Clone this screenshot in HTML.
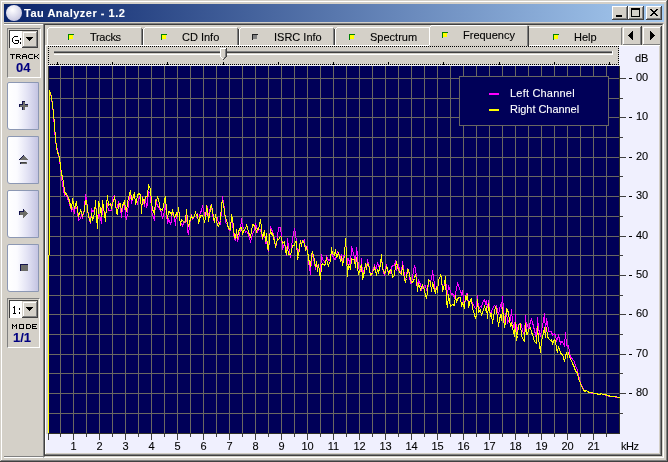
<!DOCTYPE html>
<html><head><meta charset="utf-8">
<style>
*{margin:0;padding:0;box-sizing:border-box}
html,body{width:668px;height:462px;overflow:hidden;background:#d4d0c8;font-family:"Liberation Sans",sans-serif;font-size:11px;color:#000}
.a{position:absolute}
.t{position:absolute;white-space:nowrap;line-height:13px;will-change:transform;-webkit-text-stroke:0.1px currentColor}
</style></head><body>
<!-- window frame -->
<div class="a" style="left:1px;top:1px;width:666px;height:1px;background:#fff"></div>
<div class="a" style="left:1px;top:1px;width:1px;height:460px;background:#fff"></div>
<div class="a" style="left:666px;top:1px;width:1px;height:460px;background:#808080"></div>
<div class="a" style="left:1px;top:460px;width:666px;height:1px;background:#808080"></div>
<div class="a" style="left:667px;top:0;width:1px;height:462px;background:#404040"></div>
<div class="a" style="left:0;top:461px;width:668px;height:1px;background:#404040"></div>

<!-- title bar -->
<div class="a" style="left:4px;top:4px;width:660px;height:18px;background:linear-gradient(to right,#0a246a,#a6caf0)"></div>
<div class="a" style="left:6px;top:5px;width:16px;height:16px;border-radius:50%;background:radial-gradient(circle at 40% 30%,#ffffff 0,#f0f0f8 22%,#d4d4e8 60%,#b4b4d4 100%)"></div>
<div class="t" style="left:24px;top:7px;color:#fff;font-weight:bold;font-size:11px;letter-spacing:0.5px">Tau Analyzer - 1.2</div>

<!-- caption buttons -->
<div class="a" style="left:612px;top:6px;width:16px;height:14px;background:#404040;"></div><div class="a" style="left:612px;top:6px;width:15px;height:13px;background:#fff;"></div><div class="a" style="left:613px;top:7px;width:14px;height:12px;background:#808080;"></div><div class="a" style="left:613px;top:7px;width:13px;height:11px;background:#d4d0c8;"></div><div class="a" style="left:614px;top:8px;width:12px;height:10px;background:#d4d0c8;"></div><div class="a" style="left:616px;top:15px;width:6px;height:2px;background:#000;"></div><div class="a" style="left:628px;top:6px;width:16px;height:14px;background:#404040;"></div><div class="a" style="left:628px;top:6px;width:15px;height:13px;background:#fff;"></div><div class="a" style="left:629px;top:7px;width:14px;height:12px;background:#808080;"></div><div class="a" style="left:629px;top:7px;width:13px;height:11px;background:#d4d0c8;"></div><div class="a" style="left:630px;top:8px;width:12px;height:10px;background:#d4d0c8;"></div><div class="a" style="left:631px;top:8px;width:9px;height:9px;background:transparent;border:1px solid #000;border-top-width:2px"></div><div class="a" style="left:646px;top:6px;width:16px;height:14px;background:#404040;"></div><div class="a" style="left:646px;top:6px;width:15px;height:13px;background:#fff;"></div><div class="a" style="left:647px;top:7px;width:14px;height:12px;background:#808080;"></div><div class="a" style="left:647px;top:7px;width:13px;height:11px;background:#d4d0c8;"></div><div class="a" style="left:648px;top:8px;width:12px;height:10px;background:#d4d0c8;"></div><svg class="a" style="left:646px;top:6px" width="16" height="14" shape-rendering="crispEdges"><path d="M4 3h2v1h1v1h2v-1h1v-1h2v1h-1v1h-1v1h-1v1h1v1h1v1h1v1h-2v-1h-1v-1h-2v1h-1v1h-2v-1h1v-1h1v-1h1v-1h-1v-1h-1v-1h-1z" fill="#000"/></svg>

<!-- left panel etched -->
<div class="a" style="left:4px;top:23px;width:39px;height:1px;background:#808080"></div>
<div class="a" style="left:4px;top:24px;width:39px;height:1px;background:#fff"></div>
<div class="a" style="left:4px;top:456px;width:39px;height:1px;background:#808080"></div>
<div class="a" style="left:4px;top:457px;width:39px;height:1px;background:#fff"></div>

<!-- tab panel sunken border -->
<div class="a" style="left:43px;top:23px;width:621px;height:435px;border-top:1px solid #808080;border-left:1px solid #808080;border-right:1px solid #fff;border-bottom:1px solid #fff"></div>
<div class="a" style="left:44px;top:24px;width:619px;height:433px;border-top:1px solid #404040;border-left:1px solid #404040;border-right:1px solid #d4d0c8;border-bottom:1px solid #d4d0c8"></div>

<div class="a" style="left:7px;top:28px;width:34px;height:50px;background:transparent;border-top:1px solid #808080;border-left:1px solid #808080;border-right:1px solid #fff;border-bottom:1px solid #fff"></div><div class="a" style="left:9px;top:30px;width:29px;height:18px;background:#404040;"></div><div class="a" style="left:10px;top:31px;width:28px;height:17px;background:#fff;"></div><div class="a" style="left:22px;top:31px;width:16px;height:17px;background:#404040;"></div><div class="a" style="left:22px;top:31px;width:15px;height:16px;background:#d4d0c8;"></div><div class="a" style="left:23px;top:32px;width:14px;height:15px;background:#808080;"></div><div class="a" style="left:23px;top:32px;width:13px;height:14px;background:#fff;"></div><div class="a" style="left:24px;top:33px;width:12px;height:13px;background:#d4d0c8;"></div><svg class="a" style="left:26px;top:37px" width="7" height="4" shape-rendering="crispEdges"><path d="M0 0h7v1h-1v1h-1v1h-1v1h-1v-1h-1v-1h-1v-1h-1z" fill="#000"/></svg><svg class="a" style="left:0;top:0" width="668" height="462" shape-rendering="crispEdges"><path d="M14 36h1v1h-1zM15 36h1v1h-1zM16 36h1v1h-1zM17 36h1v1h-1zM13 37h1v1h-1zM12 38h1v1h-1zM12 39h1v1h-1zM12 40h1v1h-1zM15 40h1v1h-1zM16 40h1v1h-1zM17 40h1v1h-1zM18 40h1v1h-1zM12 41h1v1h-1zM18 41h1v1h-1zM13 42h1v1h-1zM18 42h1v1h-1zM14 43h1v1h-1zM15 43h1v1h-1zM16 43h1v1h-1zM17 43h1v1h-1zM20 38h1v1h-1zM20 39h1v1h-1zM20 42h1v1h-1zM20 43h1v1h-1z" fill="#000"/></svg><svg class="a" style="left:0;top:0" width="668" height="462" shape-rendering="crispEdges"><path d="M10 54h1v1h-1zM11 54h1v1h-1zM12 54h1v1h-1zM13 54h1v1h-1zM14 54h1v1h-1zM12 55h1v1h-1zM12 56h1v1h-1zM12 57h1v1h-1zM12 58h1v1h-1zM16 54h1v1h-1zM17 54h1v1h-1zM18 54h1v1h-1zM19 54h1v1h-1zM16 55h1v1h-1zM20 55h1v1h-1zM16 56h1v1h-1zM17 56h1v1h-1zM18 56h1v1h-1zM19 56h1v1h-1zM16 57h1v1h-1zM19 57h1v1h-1zM16 58h1v1h-1zM20 58h1v1h-1zM23 54h1v1h-1zM24 54h1v1h-1zM25 54h1v1h-1zM22 55h1v1h-1zM26 55h1v1h-1zM22 56h1v1h-1zM23 56h1v1h-1zM24 56h1v1h-1zM25 56h1v1h-1zM26 56h1v1h-1zM22 57h1v1h-1zM26 57h1v1h-1zM22 58h1v1h-1zM26 58h1v1h-1zM29 54h1v1h-1zM30 54h1v1h-1zM31 54h1v1h-1zM32 54h1v1h-1zM28 55h1v1h-1zM28 56h1v1h-1zM28 57h1v1h-1zM29 58h1v1h-1zM30 58h1v1h-1zM31 58h1v1h-1zM32 58h1v1h-1zM34 54h1v1h-1zM38 54h1v1h-1zM34 55h1v1h-1zM37 55h1v1h-1zM34 56h1v1h-1zM35 56h1v1h-1zM36 56h1v1h-1zM34 57h1v1h-1zM37 57h1v1h-1zM34 58h1v1h-1zM38 58h1v1h-1z" fill="#000"/></svg><div class="t" style="left:16px;top:60px;font-size:13px;font-weight:bold;color:#000080;line-height:15px">04</div><div class="a" style="left:7px;top:82px;width:32px;height:48px;border:1px solid #8c98b4;border-radius:2px 0 0 3px;background:linear-gradient(to right,#ffffff 0%,#fbfbff 30%,#e2e2f4 65%,#c4c4e2 100%)"></div><svg class="a" style="left:19px;top:101px" width="9" height="9" shape-rendering="crispEdges"><path d="M3 0h3v3h3v3h-3v3h-3v-3h-3v-3h3z" fill="#6c6c68"/><path d="M3 0h3v1h-2v3h-3v2h-1v-3h3z M6 3h3v1h-3z M3 6h1v3h-1z" fill="#14144c"/></svg><div class="a" style="left:7px;top:136px;width:32px;height:48px;border:1px solid #8c98b4;border-radius:2px 0 0 3px;background:linear-gradient(to right,#ffffff 0%,#fbfbff 30%,#e2e2f4 65%,#c4c4e2 100%)"></div><svg class="a" style="left:19px;top:155px" width="9" height="9" shape-rendering="crispEdges"><path d="M4 0h1v1h1v1h1v1h1v1h1v1h-9v-1h1v-1h1v-1h1v-1h1z" fill="#6c6c68"/><path d="M4 0h1v1h-1v1h-1v1h-1v1h-1v1h-1v-1h1v-1h1v-1h1v-1h1z" fill="#14144c"/><rect x="1" y="7" width="7" height="2" fill="#6c6c68"/><rect x="1" y="7" width="1" height="2" fill="#14144c"/><rect x="1" y="7" width="6" height="1" fill="#404040"/></svg><div class="a" style="left:7px;top:190px;width:32px;height:48px;border:1px solid #8c98b4;border-radius:2px 0 0 3px;background:linear-gradient(to right,#ffffff 0%,#fbfbff 30%,#e2e2f4 65%,#c4c4e2 100%)"></div><svg class="a" style="left:19px;top:209px" width="9" height="9" shape-rendering="crispEdges"><path d="M4 0h1v1h1v1h1v1h1v1h1v1h-1v1h-1v1h-1v1h-1v1h-1v-3h-4v-4h4z" fill="#6c6c68"/><path d="M4 0h1v3h-4v3h-1v-4h4z" fill="#14144c"/></svg><div class="a" style="left:7px;top:244px;width:32px;height:48px;border:1px solid #8c98b4;border-radius:2px 0 0 3px;background:linear-gradient(to right,#ffffff 0%,#fbfbff 30%,#e2e2f4 65%,#c4c4e2 100%)"></div><svg class="a" style="left:20px;top:264px" width="8" height="7" shape-rendering="crispEdges"><rect x="0" y="0" width="8" height="7" fill="#6c6c68"/><path d="M0 0h8v1h-7v6h-1z" fill="#14144c"/></svg><div class="a" style="left:7px;top:298px;width:33px;height:50px;background:transparent;border-top:1px solid #808080;border-left:1px solid #808080;border-right:1px solid #fff;border-bottom:1px solid #fff"></div><div class="a" style="left:9px;top:300px;width:29px;height:18px;background:#404040;"></div><div class="a" style="left:10px;top:301px;width:28px;height:17px;background:#fff;"></div><div class="a" style="left:22px;top:301px;width:16px;height:17px;background:#404040;"></div><div class="a" style="left:22px;top:301px;width:15px;height:16px;background:#d4d0c8;"></div><div class="a" style="left:23px;top:302px;width:14px;height:15px;background:#808080;"></div><div class="a" style="left:23px;top:302px;width:13px;height:14px;background:#fff;"></div><div class="a" style="left:24px;top:303px;width:12px;height:13px;background:#d4d0c8;"></div><svg class="a" style="left:26px;top:307px" width="7" height="4" shape-rendering="crispEdges"><path d="M0 0h7v1h-1v1h-1v1h-1v1h-1v-1h-1v-1h-1v-1h-1z" fill="#000"/></svg><svg class="a" style="left:0;top:0" width="668" height="462" shape-rendering="crispEdges"><path d="M14 306h1v1h-1zM13 307h1v1h-1zM14 307h1v1h-1zM14 308h1v1h-1zM14 309h1v1h-1zM14 310h1v1h-1zM14 311h1v1h-1zM14 312h1v1h-1zM13 313h1v1h-1zM14 313h1v1h-1zM15 313h1v1h-1zM19 308h1v1h-1zM19 309h1v1h-1zM19 312h1v1h-1zM19 313h1v1h-1z" fill="#000"/></svg><svg class="a" style="left:0;top:0" width="668" height="462" shape-rendering="crispEdges"><path d="M12 324h1v1h-1zM16 324h1v1h-1zM12 325h1v1h-1zM13 325h1v1h-1zM15 325h1v1h-1zM16 325h1v1h-1zM12 326h1v1h-1zM14 326h1v1h-1zM16 326h1v1h-1zM12 327h1v1h-1zM16 327h1v1h-1zM12 328h1v1h-1zM16 328h1v1h-1zM19 324h1v1h-1zM20 324h1v1h-1zM21 324h1v1h-1zM22 324h1v1h-1zM23 324h1v1h-1zM19 325h1v1h-1zM23 325h1v1h-1zM19 326h1v1h-1zM23 326h1v1h-1zM19 327h1v1h-1zM23 327h1v1h-1zM19 328h1v1h-1zM20 328h1v1h-1zM21 328h1v1h-1zM22 328h1v1h-1zM23 328h1v1h-1zM26 324h1v1h-1zM27 324h1v1h-1zM28 324h1v1h-1zM29 324h1v1h-1zM26 325h1v1h-1zM30 325h1v1h-1zM26 326h1v1h-1zM30 326h1v1h-1zM26 327h1v1h-1zM30 327h1v1h-1zM26 328h1v1h-1zM27 328h1v1h-1zM28 328h1v1h-1zM29 328h1v1h-1zM32 324h1v1h-1zM33 324h1v1h-1zM34 324h1v1h-1zM35 324h1v1h-1zM36 324h1v1h-1zM32 325h1v1h-1zM32 326h1v1h-1zM33 326h1v1h-1zM34 326h1v1h-1zM35 326h1v1h-1zM32 327h1v1h-1zM32 328h1v1h-1zM33 328h1v1h-1zM34 328h1v1h-1zM35 328h1v1h-1zM36 328h1v1h-1z" fill="#000"/></svg><div class="t" style="left:13px;top:330px;font-size:13px;font-weight:bold;color:#000080;line-height:15px">1/1</div>

<div class="a" style="left:49px;top:27px;width:92px;height:1px;background:#fff;"></div><div class="a" style="left:48px;top:28px;width:1px;height:1px;background:#fff;"></div><div class="a" style="left:47px;top:29px;width:1px;height:16px;background:#fff;"></div><div class="a" style="left:141px;top:28px;width:1px;height:17px;background:#808080;"></div><div class="a" style="left:142px;top:29px;width:1px;height:16px;background:#404040;"></div><div class="a" style="left:68px;top:34px;width:6px;height:1px;background:#008000;"></div><div class="a" style="left:68px;top:34px;width:1px;height:6px;background:#008000;"></div><div class="a" style="left:69px;top:35px;width:4px;height:4px;background:#ffff00;"></div><div class="t" style="left:90px;top:31px;letter-spacing:-0.3px">Tracks</div><div class="a" style="left:145px;top:27px;width:92px;height:1px;background:#fff;"></div><div class="a" style="left:144px;top:28px;width:1px;height:1px;background:#fff;"></div><div class="a" style="left:143px;top:29px;width:1px;height:16px;background:#fff;"></div><div class="a" style="left:237px;top:28px;width:1px;height:17px;background:#808080;"></div><div class="a" style="left:238px;top:29px;width:1px;height:16px;background:#404040;"></div><div class="a" style="left:161px;top:34px;width:6px;height:1px;background:#008000;"></div><div class="a" style="left:161px;top:34px;width:1px;height:6px;background:#008000;"></div><div class="a" style="left:162px;top:35px;width:4px;height:4px;background:#ffff00;"></div><div class="t" style="left:182px;top:31px">CD Info</div><div class="a" style="left:241px;top:27px;width:92px;height:1px;background:#fff;"></div><div class="a" style="left:240px;top:28px;width:1px;height:1px;background:#fff;"></div><div class="a" style="left:239px;top:29px;width:1px;height:16px;background:#fff;"></div><div class="a" style="left:333px;top:28px;width:1px;height:17px;background:#808080;"></div><div class="a" style="left:334px;top:29px;width:1px;height:16px;background:#404040;"></div><div class="a" style="left:252px;top:34px;width:6px;height:1px;background:#202020;"></div><div class="a" style="left:252px;top:34px;width:1px;height:6px;background:#202020;"></div><div class="a" style="left:253px;top:35px;width:4px;height:4px;background:#808080;"></div><div class="t" style="left:274px;top:31px">ISRC Info</div><div class="a" style="left:337px;top:27px;width:92px;height:1px;background:#fff;"></div><div class="a" style="left:336px;top:28px;width:1px;height:1px;background:#fff;"></div><div class="a" style="left:335px;top:29px;width:1px;height:16px;background:#fff;"></div><div class="a" style="left:349px;top:34px;width:6px;height:1px;background:#008000;"></div><div class="a" style="left:349px;top:34px;width:1px;height:6px;background:#008000;"></div><div class="a" style="left:350px;top:35px;width:4px;height:4px;background:#ffff00;"></div><div class="t" style="left:370px;top:31px">Spectrum</div><div class="a" style="left:529px;top:27px;width:92px;height:1px;background:#fff;"></div><div class="a" style="left:528px;top:28px;width:1px;height:1px;background:#fff;"></div><div class="a" style="left:527px;top:29px;width:1px;height:16px;background:#fff;"></div><div class="a" style="left:621px;top:28px;width:1px;height:17px;background:#808080;"></div><div class="a" style="left:622px;top:29px;width:1px;height:16px;background:#404040;"></div><div class="a" style="left:553px;top:34px;width:6px;height:1px;background:#008000;"></div><div class="a" style="left:553px;top:34px;width:1px;height:6px;background:#008000;"></div><div class="a" style="left:554px;top:35px;width:4px;height:4px;background:#ffff00;"></div><div class="t" style="left:574px;top:31px">Help</div><div class="a" style="left:430px;top:26px;width:97px;height:20px;background:#d4d0c8;"></div><div class="a" style="left:430px;top:26px;width:1px;height:1px;background:#fff;"></div><div class="a" style="left:431px;top:25px;width:96px;height:1px;background:#fff;"></div><div class="a" style="left:429px;top:27px;width:1px;height:18px;background:#fff;"></div><div class="a" style="left:527px;top:26px;width:1px;height:20px;background:#808080;"></div><div class="a" style="left:528px;top:26px;width:1px;height:20px;background:#404040;"></div><div class="a" style="left:442px;top:32px;width:6px;height:1px;background:#008000;"></div><div class="a" style="left:442px;top:32px;width:1px;height:6px;background:#008000;"></div><div class="a" style="left:443px;top:33px;width:4px;height:4px;background:#ffff00;"></div><div class="t" style="left:463px;top:29px">Frequency</div><div class="a" style="left:622px;top:26px;width:20px;height:20px;background:#404040;"></div><div class="a" style="left:622px;top:26px;width:19px;height:19px;background:#d4d0c8;"></div><div class="a" style="left:623px;top:27px;width:18px;height:18px;background:#808080;"></div><div class="a" style="left:623px;top:27px;width:17px;height:17px;background:#fff;"></div><div class="a" style="left:624px;top:28px;width:16px;height:16px;background:#d4d0c8;"></div><div class="a" style="left:642px;top:26px;width:20px;height:20px;background:#404040;"></div><div class="a" style="left:642px;top:26px;width:19px;height:19px;background:#d4d0c8;"></div><div class="a" style="left:643px;top:27px;width:18px;height:18px;background:#808080;"></div><div class="a" style="left:643px;top:27px;width:17px;height:17px;background:#fff;"></div><div class="a" style="left:644px;top:28px;width:16px;height:16px;background:#d4d0c8;"></div><svg class="a" style="left:628px;top:31px" width="5" height="9" shape-rendering="crispEdges"><path d="M4 0h1v9h-1v-1h-1v-1h-1v-1h-1v-1h-1v-1h1v-1h1v-1h1v-1h1z" fill="#000"/></svg><svg class="a" style="left:650px;top:31px" width="5" height="9" shape-rendering="crispEdges"><path d="M0 0h1v1h1v1h1v1h1v1h1v1h-1v1h-1v1h-1v1h-1v1h-1z" fill="#000"/></svg>

<div class="a" style="left:45px;top:45px;width:384px;height:1px;background:#fff;"></div><div class="a" style="left:529px;top:45px;width:131px;height:1px;background:#fff;"></div><div class="a" style="left:45px;top:45px;width:1px;height:410px;background:#fff;"></div><div class="a" style="left:660px;top:45px;width:1px;height:410px;background:#808080;"></div><div class="a" style="left:661px;top:45px;width:1px;height:411px;background:#404040;"></div><div class="a" style="left:45px;top:454px;width:616px;height:1px;background:#808080;"></div><div class="a" style="left:45px;top:455px;width:617px;height:1px;background:#404040;"></div><div class="a" style="left:48px;top:65px;width:572px;height:1px;background:#f4f4fc;"></div><div class="a" style="left:46px;top:434px;width:613px;height:19px;background:#f0f0fe;"></div><div class="a" style="left:619px;top:46px;width:40px;height:388px;background:#f0f0fe;"></div><div class="a" style="left:48px;top:46px;width:571px;height:19px;background:transparent;border:1px dotted #000"></div><div class="a" style="left:54px;top:51px;width:559px;height:1px;background:#808080;"></div><div class="a" style="left:54px;top:52px;width:558px;height:1px;background:#404040;"></div><div class="a" style="left:54px;top:54px;width:559px;height:1px;background:#fff;"></div><div class="a" style="left:612px;top:51px;width:1px;height:4px;background:#fff;"></div><div class="a" style="left:57px;top:62px;width:1px;height:3px;background:#000;"></div><div class="a" style="left:112px;top:62px;width:1px;height:3px;background:#000;"></div><div class="a" style="left:167px;top:62px;width:1px;height:3px;background:#000;"></div><div class="a" style="left:223px;top:62px;width:1px;height:3px;background:#000;"></div><div class="a" style="left:278px;top:62px;width:1px;height:3px;background:#000;"></div><div class="a" style="left:333px;top:62px;width:1px;height:3px;background:#000;"></div><div class="a" style="left:388px;top:62px;width:1px;height:3px;background:#000;"></div><div class="a" style="left:443px;top:62px;width:1px;height:3px;background:#000;"></div><div class="a" style="left:499px;top:62px;width:1px;height:3px;background:#000;"></div><div class="a" style="left:554px;top:62px;width:1px;height:3px;background:#000;"></div><div class="a" style="left:609px;top:62px;width:1px;height:3px;background:#000;"></div><svg class="a" style="left:220px;top:48px" width="8" height="14" shape-rendering="crispEdges"><path d="M0 0h7v9h-1v1h-1v1h-1v1h-1v-1h-1v-1h-1v-1h-1z" fill="#d4d0c8"/><path d="M0 0h6v1h-5v8h-1z M1 9h1v1h-1z M2 10h1v1h-1z" fill="#fff"/><path d="M5 1h1v8h-1z M4 9h1v1h-1z" fill="#808080"/><path d="M6 0h1v9h-1z M5 9h1v1h-1z M4 10h1v1h-1z M3 11h1v1h-1z" fill="#404040"/></svg><svg class="a" style="left:48px;top:66px;overflow:visible" width="572" height="368" shape-rendering="crispEdges"><rect x="0" y="0" width="572" height="368" fill="#000058"/><path d="M12.5 0V368M25.5 0V368M38.5 0V368M51.5 0V368M64.5 0V368M77.5 0V368M90.5 0V368M103.5 0V368M116.5 0V368M129.5 0V368M142.5 0V368M155.5 0V368M168.5 0V368M181.5 0V368M194.5 0V368M207.5 0V368M220.5 0V368M233.5 0V368M246.5 0V368M259.5 0V368M272.5 0V368M285.5 0V368M298.5 0V368M311.5 0V368M324.5 0V368M337.5 0V368M350.5 0V368M363.5 0V368M376.5 0V368M389.5 0V368M402.5 0V368M415.5 0V368M428.5 0V368M441.5 0V368M454.5 0V368M467.5 0V368M480.5 0V368M493.5 0V368M506.5 0V368M519.5 0V368M532.5 0V368M545.5 0V368M558.5 0V368M0 12.5H572M0 32.5H572M0 51.5H572M0 71.5H572M0 91.5H572M0 110.5H572M0 130.5H572M0 150.5H572M0 170.5H572M0 189.5H572M0 209.5H572M0 229.5H572M0 248.5H572M0 268.5H572M0 288.5H572M0 307.5H572M0 327.5H572M0 347.5H572" stroke="#6a6862" stroke-width="1" fill="none"/><rect x="571" y="0" width="1" height="368" fill="#303028"/><rect x="0" y="0" width="1" height="368" fill="#3a3a36"/><rect x="0" y="367" width="572" height="1" fill="#303028"/></svg><div class="a" style="left:48px;top:434px;width:1px;height:6px;background:#404040;"></div><div class="a" style="left:60px;top:434px;width:1px;height:3px;background:#404040;"></div><div class="a" style="left:73px;top:434px;width:1px;height:6px;background:#404040;"></div><div class="a" style="left:86px;top:434px;width:1px;height:3px;background:#404040;"></div><div class="a" style="left:99px;top:434px;width:1px;height:6px;background:#404040;"></div><div class="a" style="left:112px;top:434px;width:1px;height:3px;background:#404040;"></div><div class="a" style="left:125px;top:434px;width:1px;height:6px;background:#404040;"></div><div class="a" style="left:138px;top:434px;width:1px;height:3px;background:#404040;"></div><div class="a" style="left:151px;top:434px;width:1px;height:6px;background:#404040;"></div><div class="a" style="left:164px;top:434px;width:1px;height:3px;background:#404040;"></div><div class="a" style="left:177px;top:434px;width:1px;height:6px;background:#404040;"></div><div class="a" style="left:190px;top:434px;width:1px;height:3px;background:#404040;"></div><div class="a" style="left:203px;top:434px;width:1px;height:6px;background:#404040;"></div><div class="a" style="left:216px;top:434px;width:1px;height:3px;background:#404040;"></div><div class="a" style="left:229px;top:434px;width:1px;height:6px;background:#404040;"></div><div class="a" style="left:242px;top:434px;width:1px;height:3px;background:#404040;"></div><div class="a" style="left:255px;top:434px;width:1px;height:6px;background:#404040;"></div><div class="a" style="left:268px;top:434px;width:1px;height:3px;background:#404040;"></div><div class="a" style="left:281px;top:434px;width:1px;height:6px;background:#404040;"></div><div class="a" style="left:294px;top:434px;width:1px;height:3px;background:#404040;"></div><div class="a" style="left:307px;top:434px;width:1px;height:6px;background:#404040;"></div><div class="a" style="left:320px;top:434px;width:1px;height:3px;background:#404040;"></div><div class="a" style="left:333px;top:434px;width:1px;height:6px;background:#404040;"></div><div class="a" style="left:346px;top:434px;width:1px;height:3px;background:#404040;"></div><div class="a" style="left:359px;top:434px;width:1px;height:6px;background:#404040;"></div><div class="a" style="left:372px;top:434px;width:1px;height:3px;background:#404040;"></div><div class="a" style="left:385px;top:434px;width:1px;height:6px;background:#404040;"></div><div class="a" style="left:398px;top:434px;width:1px;height:3px;background:#404040;"></div><div class="a" style="left:411px;top:434px;width:1px;height:6px;background:#404040;"></div><div class="a" style="left:424px;top:434px;width:1px;height:3px;background:#404040;"></div><div class="a" style="left:437px;top:434px;width:1px;height:6px;background:#404040;"></div><div class="a" style="left:450px;top:434px;width:1px;height:3px;background:#404040;"></div><div class="a" style="left:463px;top:434px;width:1px;height:6px;background:#404040;"></div><div class="a" style="left:476px;top:434px;width:1px;height:3px;background:#404040;"></div><div class="a" style="left:489px;top:434px;width:1px;height:6px;background:#404040;"></div><div class="a" style="left:502px;top:434px;width:1px;height:3px;background:#404040;"></div><div class="a" style="left:515px;top:434px;width:1px;height:6px;background:#404040;"></div><div class="a" style="left:528px;top:434px;width:1px;height:3px;background:#404040;"></div><div class="a" style="left:541px;top:434px;width:1px;height:6px;background:#404040;"></div><div class="a" style="left:554px;top:434px;width:1px;height:3px;background:#404040;"></div><div class="a" style="left:567px;top:434px;width:1px;height:6px;background:#404040;"></div><div class="a" style="left:580px;top:434px;width:1px;height:3px;background:#404040;"></div><div class="a" style="left:593px;top:434px;width:1px;height:6px;background:#404040;"></div><div class="a" style="left:606px;top:434px;width:1px;height:3px;background:#404040;"></div><div class="a" style="left:620px;top:78px;width:6px;height:1px;background:#404040;"></div><div class="a" style="left:629px;top:78px;width:3px;height:1px;background:#000;"></div><div class="t" style="left:636px;top:71px">00</div><div class="a" style="left:620px;top:98px;width:3px;height:1px;background:#404040;"></div><div class="a" style="left:620px;top:117px;width:6px;height:1px;background:#404040;"></div><div class="a" style="left:629px;top:117px;width:3px;height:1px;background:#000;"></div><div class="t" style="left:636px;top:110px">10</div><div class="a" style="left:620px;top:137px;width:3px;height:1px;background:#404040;"></div><div class="a" style="left:620px;top:157px;width:6px;height:1px;background:#404040;"></div><div class="a" style="left:629px;top:157px;width:3px;height:1px;background:#000;"></div><div class="t" style="left:636px;top:150px">20</div><div class="a" style="left:620px;top:176px;width:3px;height:1px;background:#404040;"></div><div class="a" style="left:620px;top:196px;width:6px;height:1px;background:#404040;"></div><div class="a" style="left:629px;top:196px;width:3px;height:1px;background:#000;"></div><div class="t" style="left:636px;top:189px">30</div><div class="a" style="left:620px;top:216px;width:3px;height:1px;background:#404040;"></div><div class="a" style="left:620px;top:236px;width:6px;height:1px;background:#404040;"></div><div class="a" style="left:629px;top:236px;width:3px;height:1px;background:#000;"></div><div class="t" style="left:636px;top:229px">40</div><div class="a" style="left:620px;top:255px;width:3px;height:1px;background:#404040;"></div><div class="a" style="left:620px;top:275px;width:6px;height:1px;background:#404040;"></div><div class="a" style="left:629px;top:275px;width:3px;height:1px;background:#000;"></div><div class="t" style="left:636px;top:268px">50</div><div class="a" style="left:620px;top:295px;width:3px;height:1px;background:#404040;"></div><div class="a" style="left:620px;top:314px;width:6px;height:1px;background:#404040;"></div><div class="a" style="left:629px;top:314px;width:3px;height:1px;background:#000;"></div><div class="t" style="left:636px;top:307px">60</div><div class="a" style="left:620px;top:334px;width:3px;height:1px;background:#404040;"></div><div class="a" style="left:620px;top:354px;width:6px;height:1px;background:#404040;"></div><div class="a" style="left:629px;top:354px;width:3px;height:1px;background:#000;"></div><div class="t" style="left:636px;top:347px">70</div><div class="a" style="left:620px;top:373px;width:3px;height:1px;background:#404040;"></div><div class="a" style="left:620px;top:393px;width:6px;height:1px;background:#404040;"></div><div class="a" style="left:629px;top:393px;width:3px;height:1px;background:#000;"></div><div class="t" style="left:636px;top:386px">80</div><div class="a" style="left:620px;top:413px;width:3px;height:1px;background:#404040;"></div><div class="t" style="left:53px;top:440px;width:41px;text-align:center">1</div><div class="t" style="left:79px;top:440px;width:41px;text-align:center">2</div><div class="t" style="left:105px;top:440px;width:41px;text-align:center">3</div><div class="t" style="left:131px;top:440px;width:41px;text-align:center">4</div><div class="t" style="left:157px;top:440px;width:41px;text-align:center">5</div><div class="t" style="left:183px;top:440px;width:41px;text-align:center">6</div><div class="t" style="left:209px;top:440px;width:41px;text-align:center">7</div><div class="t" style="left:235px;top:440px;width:41px;text-align:center">8</div><div class="t" style="left:261px;top:440px;width:41px;text-align:center">9</div><div class="t" style="left:287px;top:440px;width:41px;text-align:center">10</div><div class="t" style="left:313px;top:440px;width:41px;text-align:center">11</div><div class="t" style="left:339px;top:440px;width:41px;text-align:center">12</div><div class="t" style="left:365px;top:440px;width:41px;text-align:center">13</div><div class="t" style="left:391px;top:440px;width:41px;text-align:center">14</div><div class="t" style="left:417px;top:440px;width:41px;text-align:center">15</div><div class="t" style="left:443px;top:440px;width:41px;text-align:center">16</div><div class="t" style="left:469px;top:440px;width:41px;text-align:center">17</div><div class="t" style="left:495px;top:440px;width:41px;text-align:center">18</div><div class="t" style="left:521px;top:440px;width:41px;text-align:center">19</div><div class="t" style="left:547px;top:440px;width:41px;text-align:center">20</div><div class="t" style="left:573px;top:440px;width:41px;text-align:center">21</div><div class="t" style="left:621px;top:440px;letter-spacing:-0.5px">kHz</div><div class="t" style="left:635px;top:52px">dB</div><svg class="a" style="left:0;top:0" width="668" height="462"><polyline points="48.5,433.5 49.5,90.5 50.5,93.5 51.5,97.5 52.5,105.5 53.5,113.5 54.5,129.5 55.5,140.5 56.5,146.5 57.5,150.5 58.5,153.5 60.5,167.5 61.5,176.5 62.5,184.5 64.5,195.5 65.5,194.5 66.5,195.5 67.5,198.5 68.5,200.5 70.5,207.5 71.5,210.5 72.5,208.5 74.5,212.5 75.5,206.5 76.5,207.5 77.5,210.5 78.5,220.5 80.5,218.5 81.5,215.5 82.5,217.5 84.5,208.5 85.5,194.5 86.5,199.5 87.5,207.5 88.5,215.5 90.5,223.5 91.5,208.5 92.5,211.5 94.5,210.5 95.5,206.5 96.5,209.5 97.5,226.5 98.5,212.5 100.5,218.5 101.5,223.5 102.5,206.5 104.5,212.5 105.5,217.5 106.5,206.5 107.5,204.5 108.5,210.5 110.5,210.5 111.5,210.5 112.5,197.5 114.5,195.5 115.5,202.5 116.5,211.5 117.5,205.5 118.5,202.5 120.5,208.5 121.5,217.5 122.5,206.5 124.5,203.5 125.5,215.5 126.5,219.5 127.5,213.5 128.5,203.5 130.5,193.5 131.5,203.5 132.5,198.5 134.5,192.5 135.5,204.5 136.5,200.5 137.5,203.5 138.5,199.5 140.5,195.5 141.5,211.5 142.5,196.5 144.5,206.5 145.5,198.5 146.5,207.5 147.5,203.5 148.5,191.5 150.5,193.5 151.5,211.5 152.5,214.5 154.5,220.5 155.5,199.5 156.5,203.5 157.5,205.5 158.5,207.5 160.5,210.5 161.5,212.5 162.5,218.5 164.5,211.5 165.5,204.5 166.5,214.5 167.5,223.5 168.5,219.5 170.5,223.5 171.5,221.5 172.5,209.5 174.5,217.5 175.5,225.5 176.5,213.5 177.5,216.5 178.5,209.5 180.5,224.5 181.5,223.5 182.5,225.5 184.5,221.5 185.5,222.5 186.5,211.5 187.5,231.5 188.5,233.5 190.5,218.5 191.5,214.5 192.5,219.5 194.5,216.5 195.5,211.5 196.5,216.5 197.5,214.5 198.5,223.5 200.5,211.5 201.5,211.5 202.5,205.5 204.5,214.5 205.5,216.5 206.5,212.5 207.5,206.5 208.5,218.5 210.5,205.5 211.5,205.5 212.5,214.5 214.5,222.5 215.5,214.5 216.5,221.5 217.5,217.5 218.5,223.5 220.5,224.5 221.5,208.5 222.5,196.5 224.5,209.5 225.5,222.5 226.5,223.5 227.5,223.5 228.5,229.5 230.5,230.5 231.5,215.5 232.5,224.5 234.5,239.5 235.5,240.5 236.5,234.5 237.5,241.5 238.5,238.5 240.5,229.5 241.5,218.5 242.5,226.5 244.5,229.5 245.5,232.5 246.5,231.5 247.5,232.5 248.5,235.5 250.5,241.5 251.5,238.5 252.5,233.5 254.5,230.5 255.5,223.5 256.5,226.5 257.5,231.5 258.5,229.5 260.5,229.5 261.5,234.5 262.5,238.5 264.5,232.5 265.5,243.5 266.5,239.5 267.5,247.5 268.5,251.5 270.5,226.5 271.5,230.5 272.5,230.5 274.5,239.5 275.5,245.5 276.5,245.5 277.5,237.5 278.5,227.5 280.5,227.5 281.5,235.5 282.5,249.5 284.5,243.5 285.5,246.5 286.5,255.5 287.5,238.5 288.5,246.5 290.5,257.5 291.5,248.5 292.5,238.5 294.5,228.5 295.5,232.5 296.5,242.5 297.5,253.5 298.5,252.5 300.5,240.5 301.5,244.5 302.5,241.5 304.5,239.5 305.5,250.5 306.5,249.5 307.5,246.5 308.5,261.5 310.5,274.5 311.5,257.5 312.5,255.5 314.5,262.5 315.5,269.5 316.5,261.5 317.5,267.5 318.5,266.5 320.5,272.5 321.5,254.5 322.5,259.5 324.5,261.5 325.5,264.5 326.5,255.5 327.5,258.5 328.5,260.5 330.5,259.5 331.5,251.5 332.5,255.5 334.5,259.5 335.5,259.5 336.5,254.5 337.5,251.5 338.5,252.5 340.5,258.5 341.5,254.5 342.5,261.5 344.5,253.5 345.5,240.5 346.5,251.5 347.5,264.5 348.5,258.5 350.5,266.5 351.5,246.5 352.5,249.5 354.5,258.5 355.5,263.5 356.5,247.5 357.5,254.5 358.5,268.5 360.5,271.5 361.5,258.5 362.5,274.5 364.5,268.5 365.5,267.5 366.5,268.5 367.5,259.5 368.5,263.5 370.5,274.5 371.5,275.5 372.5,270.5 374.5,265.5 375.5,269.5 376.5,267.5 377.5,262.5 378.5,266.5 380.5,265.5 381.5,257.5 382.5,267.5 384.5,275.5 385.5,267.5 386.5,264.5 387.5,271.5 388.5,272.5 390.5,273.5 391.5,267.5 392.5,265.5 394.5,265.5 395.5,260.5 396.5,270.5 397.5,267.5 398.5,265.5 400.5,273.5 401.5,272.5 402.5,261.5 404.5,275.5 405.5,281.5 406.5,275.5 407.5,268.5 408.5,269.5 410.5,283.5 411.5,283.5 412.5,276.5 414.5,265.5 415.5,268.5 416.5,276.5 417.5,286.5 418.5,280.5 420.5,284.5 421.5,289.5 422.5,287.5 424.5,285.5 425.5,285.5 426.5,290.5 427.5,291.5 428.5,282.5 430.5,280.5 431.5,279.5 432.5,270.5 434.5,284.5 435.5,291.5 436.5,286.5 437.5,292.5 438.5,279.5 440.5,276.5 441.5,277.5 442.5,289.5 444.5,284.5 445.5,276.5 446.5,291.5 447.5,294.5 448.5,285.5 450.5,291.5 451.5,294.5 452.5,293.5 454.5,297.5 455.5,292.5 456.5,289.5 457.5,283.5 458.5,285.5 460.5,291.5 461.5,294.5 462.5,290.5 464.5,306.5 465.5,298.5 466.5,293.5 467.5,293.5 468.5,305.5 470.5,300.5 471.5,302.5 472.5,302.5 474.5,307.5 475.5,308.5 476.5,307.5 477.5,295.5 478.5,309.5 480.5,306.5 481.5,307.5 482.5,302.5 484.5,299.5 485.5,303.5 486.5,301.5 487.5,307.5 488.5,300.5 490.5,315.5 491.5,311.5 492.5,308.5 494.5,305.5 495.5,306.5 496.5,305.5 497.5,310.5 498.5,314.5 500.5,304.5 501.5,308.5 502.5,296.5 504.5,322.5 505.5,315.5 506.5,311.5 507.5,322.5 508.5,320.5 510.5,320.5 511.5,309.5 512.5,321.5 514.5,330.5 515.5,314.5 516.5,333.5 517.5,330.5 518.5,324.5 520.5,323.5 521.5,325.5 522.5,330.5 524.5,335.5 525.5,315.5 526.5,328.5 527.5,324.5 528.5,329.5 530.5,321.5 531.5,319.5 532.5,322.5 534.5,330.5 535.5,334.5 536.5,338.5 537.5,317.5 538.5,328.5 540.5,336.5 541.5,329.5 542.5,326.5 544.5,313.5 545.5,331.5 546.5,318.5 547.5,322.5 548.5,331.5 550.5,331.5 551.5,331.5 552.5,335.5 554.5,333.5 555.5,335.5 556.5,340.5 557.5,338.5 558.5,335.5 560.5,343.5 561.5,341.5 562.5,341.5 564.5,346.5 565.5,332.5 566.5,344.5 567.5,346.5 568.5,345.5 570.5,357.5 571.5,357.5 572.5,359.5 574.5,361.5 575.5,366.5 577.5,369.5 578.5,375.5 580.5,382.5 581.5,385.5 583.5,389.5 584.5,390.5 586.5,390.5 587.5,391.5 589.5,392.5 590.5,392.5 592.5,393.5 593.5,393.5 595.5,393.5 596.5,393.5 598.5,394.5 599.5,394.5 601.5,393.5 602.5,394.5 604.5,394.5 605.5,395.5 607.5,395.5 608.5,396.5 610.5,396.5 611.5,396.5 613.5,396.5 614.5,396.5 616.5,397.5 617.5,397.5 619.5,397.5" fill="none" stroke="#ff00ff" stroke-width="1" shape-rendering="crispEdges"/><polyline points="48.5,433.5 49.5,90.5 50.5,93.5 51.5,96.5 52.5,104.5 53.5,112.5 54.5,125.5 55.5,138.5 56.5,146.5 57.5,153.5 58.5,153.5 60.5,164.5 61.5,174.5 62.5,176.5 64.5,190.5 65.5,194.5 66.5,193.5 67.5,196.5 68.5,197.5 70.5,205.5 71.5,209.5 72.5,198.5 74.5,208.5 75.5,204.5 76.5,202.5 77.5,209.5 78.5,216.5 80.5,210.5 81.5,212.5 82.5,215.5 84.5,210.5 85.5,200.5 86.5,200.5 87.5,209.5 88.5,216.5 90.5,222.5 91.5,213.5 92.5,220.5 94.5,213.5 95.5,200.5 96.5,216.5 97.5,228.5 98.5,201.5 100.5,208.5 101.5,216.5 102.5,200.5 104.5,214.5 105.5,221.5 106.5,204.5 107.5,195.5 108.5,205.5 110.5,203.5 111.5,208.5 112.5,203.5 114.5,197.5 115.5,201.5 116.5,213.5 117.5,214.5 118.5,204.5 120.5,203.5 121.5,211.5 122.5,205.5 124.5,201.5 125.5,208.5 126.5,211.5 127.5,203.5 128.5,197.5 130.5,190.5 131.5,199.5 132.5,199.5 134.5,192.5 135.5,204.5 136.5,201.5 137.5,195.5 138.5,193.5 140.5,194.5 141.5,213.5 142.5,197.5 144.5,202.5 145.5,196.5 146.5,196.5 147.5,196.5 148.5,184.5 150.5,189.5 151.5,202.5 152.5,209.5 154.5,213.5 155.5,200.5 156.5,200.5 157.5,197.5 158.5,199.5 160.5,210.5 161.5,209.5 162.5,210.5 164.5,200.5 165.5,196.5 166.5,211.5 167.5,218.5 168.5,211.5 170.5,212.5 171.5,214.5 172.5,210.5 174.5,217.5 175.5,216.5 176.5,212.5 177.5,216.5 178.5,207.5 180.5,225.5 181.5,219.5 182.5,220.5 184.5,222.5 185.5,221.5 186.5,209.5 187.5,220.5 188.5,226.5 190.5,218.5 191.5,216.5 192.5,218.5 194.5,216.5 195.5,212.5 196.5,215.5 197.5,214.5 198.5,223.5 200.5,215.5 201.5,215.5 202.5,215.5 204.5,221.5 205.5,218.5 206.5,205.5 207.5,210.5 208.5,221.5 210.5,208.5 211.5,204.5 212.5,211.5 214.5,222.5 215.5,214.5 216.5,219.5 217.5,225.5 218.5,226.5 220.5,220.5 221.5,204.5 222.5,200.5 224.5,210.5 225.5,218.5 226.5,219.5 227.5,224.5 228.5,228.5 230.5,229.5 231.5,214.5 232.5,218.5 234.5,237.5 235.5,238.5 236.5,229.5 237.5,238.5 238.5,231.5 240.5,227.5 241.5,227.5 242.5,233.5 244.5,229.5 245.5,228.5 246.5,225.5 247.5,227.5 248.5,232.5 250.5,236.5 251.5,231.5 252.5,224.5 254.5,225.5 255.5,228.5 256.5,231.5 257.5,228.5 258.5,229.5 260.5,219.5 261.5,228.5 262.5,238.5 264.5,230.5 265.5,241.5 266.5,233.5 267.5,247.5 268.5,249.5 270.5,229.5 271.5,234.5 272.5,233.5 274.5,241.5 275.5,246.5 276.5,243.5 277.5,238.5 278.5,239.5 280.5,236.5 281.5,237.5 282.5,243.5 284.5,241.5 285.5,250.5 286.5,254.5 287.5,246.5 288.5,254.5 290.5,254.5 291.5,251.5 292.5,245.5 294.5,245.5 295.5,241.5 296.5,241.5 297.5,258.5 298.5,256.5 300.5,240.5 301.5,246.5 302.5,240.5 304.5,243.5 305.5,249.5 306.5,247.5 307.5,250.5 308.5,258.5 310.5,266.5 311.5,255.5 312.5,251.5 314.5,260.5 315.5,266.5 316.5,261.5 317.5,271.5 318.5,264.5 320.5,279.5 321.5,265.5 322.5,263.5 324.5,265.5 325.5,263.5 326.5,257.5 327.5,263.5 328.5,265.5 330.5,260.5 331.5,247.5 332.5,253.5 334.5,255.5 335.5,249.5 336.5,257.5 337.5,256.5 338.5,252.5 340.5,261.5 341.5,256.5 342.5,265.5 344.5,255.5 345.5,238.5 346.5,255.5 347.5,276.5 348.5,264.5 350.5,269.5 351.5,258.5 352.5,259.5 354.5,259.5 355.5,267.5 356.5,257.5 357.5,266.5 358.5,274.5 360.5,268.5 361.5,264.5 362.5,279.5 364.5,271.5 365.5,263.5 366.5,269.5 367.5,263.5 368.5,264.5 370.5,275.5 371.5,274.5 372.5,272.5 374.5,267.5 375.5,271.5 376.5,274.5 377.5,270.5 378.5,272.5 380.5,264.5 381.5,254.5 382.5,268.5 384.5,273.5 385.5,272.5 386.5,266.5 387.5,267.5 388.5,273.5 390.5,269.5 391.5,270.5 392.5,277.5 394.5,275.5 395.5,265.5 396.5,262.5 397.5,266.5 398.5,270.5 400.5,273.5 401.5,274.5 402.5,265.5 404.5,279.5 405.5,281.5 406.5,278.5 407.5,269.5 408.5,269.5 410.5,279.5 411.5,282.5 412.5,282.5 414.5,278.5 415.5,274.5 416.5,279.5 417.5,291.5 418.5,283.5 420.5,289.5 421.5,287.5 422.5,285.5 424.5,290.5 425.5,295.5 426.5,298.5 427.5,291.5 428.5,279.5 430.5,281.5 431.5,291.5 432.5,282.5 434.5,290.5 435.5,293.5 436.5,287.5 437.5,292.5 438.5,280.5 440.5,275.5 441.5,277.5 442.5,291.5 444.5,284.5 445.5,276.5 446.5,302.5 447.5,307.5 448.5,294.5 450.5,306.5 451.5,305.5 452.5,304.5 454.5,305.5 455.5,295.5 456.5,302.5 457.5,299.5 458.5,297.5 460.5,297.5 461.5,305.5 462.5,303.5 464.5,307.5 465.5,295.5 466.5,298.5 467.5,294.5 468.5,307.5 470.5,299.5 471.5,298.5 472.5,308.5 474.5,314.5 475.5,318.5 476.5,314.5 477.5,299.5 478.5,312.5 480.5,309.5 481.5,315.5 482.5,312.5 484.5,306.5 485.5,309.5 486.5,306.5 487.5,318.5 488.5,303.5 490.5,316.5 491.5,313.5 492.5,323.5 494.5,310.5 495.5,307.5 496.5,309.5 497.5,317.5 498.5,326.5 500.5,314.5 501.5,320.5 502.5,307.5 504.5,327.5 505.5,322.5 506.5,308.5 507.5,309.5 508.5,313.5 510.5,326.5 511.5,323.5 512.5,327.5 514.5,336.5 515.5,322.5 516.5,340.5 517.5,335.5 518.5,325.5 520.5,323.5 521.5,335.5 522.5,338.5 524.5,341.5 525.5,323.5 526.5,334.5 527.5,334.5 528.5,329.5 530.5,327.5 531.5,332.5 532.5,334.5 534.5,341.5 535.5,342.5 536.5,343.5 537.5,326.5 538.5,338.5 540.5,352.5 541.5,340.5 542.5,337.5 544.5,327.5 545.5,337.5 546.5,327.5 547.5,336.5 548.5,338.5 550.5,340.5 551.5,339.5 552.5,343.5 554.5,339.5 555.5,340.5 556.5,349.5 557.5,352.5 558.5,346.5 560.5,352.5 561.5,354.5 562.5,354.5 564.5,361.5 565.5,356.5 566.5,352.5 567.5,356.5 568.5,353.5 570.5,359.5 571.5,360.5 572.5,363.5 574.5,367.5 575.5,371.5 577.5,372.5 578.5,378.5 580.5,383.5 581.5,386.5 583.5,389.5 584.5,391.5 586.5,390.5 587.5,391.5 589.5,392.5 590.5,392.5 592.5,392.5 593.5,393.5 595.5,393.5 596.5,393.5 598.5,394.5 599.5,394.5 601.5,393.5 602.5,394.5 604.5,394.5 605.5,394.5 607.5,395.5 608.5,395.5 610.5,396.5 611.5,396.5 613.5,396.5 614.5,396.5 616.5,396.5 617.5,397.5 619.5,397.5" fill="none" stroke="#ffff00" stroke-width="1" shape-rendering="crispEdges"/></svg><div class="a" style="left:459px;top:76px;width:150px;height:50px;background:#000058;border:1px solid #6a6862"></div><div class="a" style="left:489px;top:93px;width:10px;height:2px;background:#ff00ff;"></div><div class="a" style="left:489px;top:109px;width:10px;height:2px;background:#ffff00;"></div><div class="t" style="left:510px;top:87px;color:#fff;letter-spacing:0.2px">Left Channel</div><div class="t" style="left:510px;top:103px;color:#fff;letter-spacing:-0.05px">Right Channel</div>

</body></html>
